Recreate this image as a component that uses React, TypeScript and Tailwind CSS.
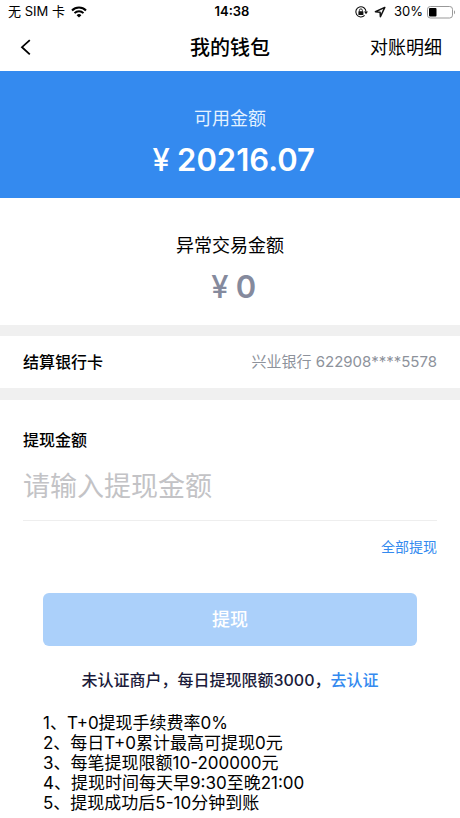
import React, { useState } from 'react';

const RULES = [
    '1、T+0提现手续费率0%',
    '2、每日T+0累计最高可提现0元',
    '3、每笔提现限额10-200000元',
    '4、提现时间每天早9:30至晚21:00',
    '5、提现成功后5-10分钟到账',
];

const WifiIcon: React.FC = () => (
    <svg viewBox="0 0 16 12" className="h-3 w-4" fill="none">
        <path
            d="M1 4.4a10 10 0 0 1 14 0"
            stroke="#000"
            strokeWidth="2.1"
        />
        <path
            d="M3.5 7.1a6.4 6.4 0 0 1 9 0"
            stroke="#000"
            strokeWidth="2"
        />
        <path d="M8 11.6 5.6 9.2a3.4 3.4 0 0 1 4.8 0Z" fill="#000" />
    </svg>
);

const RotationLockIcon: React.FC = () => (
    <svg viewBox="0 0 14 14" className="size-3.5" fill="none">
        <path
            d="M10.6 10.4A5.1 5.1 0 1 1 12 6.8"
            stroke="#111"
            strokeWidth="1.1"
        />
        <path d="M10 6.6h4L12 9.2Z" fill="#111" />
        <rect x="4.4" y="6.3" width="5" height="3.7" rx=".5" fill="#111" />
        <path
            d="M5.4 6.6V5.4a1.5 1.5 0 0 1 3 0v1.2"
            stroke="#111"
            strokeWidth=".9"
        />
    </svg>
);

const LocationIcon: React.FC = () => (
    <svg viewBox="0 0 12 12" className="size-3" fill="none">
        <path
            d="M10.8 1.4 1.4 5.8l4.7.4.3 4.6Z"
            stroke="#111"
            strokeWidth="1.5"
            strokeLinejoin="round"
        />
    </svg>
);

const BatteryIcon: React.FC = () => (
    <svg viewBox="0 0 29 13" className="h-[13px] w-[29px]" fill="none">
        <rect
            x=".5"
            y=".5"
            width="25"
            height="11.5"
            rx="2.8"
            stroke="#999"
        />
        <rect x="2" y="2" width="7.5" height="8.5" rx="1" fill="#000" />
        <path d="M27 4.2c1.4.5 1.4 3.6 0 4.1Z" fill="#999" />
    </svg>
);

const StatusBar: React.FC = () => (
    <div className="grid h-6 grid-cols-[1fr_auto_1fr] items-center pr-1 pl-2 text-[13px]">
        <div className="flex items-center gap-1.5">
            <span>无 SIM 卡</span>
            <WifiIcon />
        </div>
        <span className="font-semibold">14:38</span>
        <div className="flex items-center justify-end">
            <RotationLockIcon />
            <span className="mr-2 ml-1.5">
                <LocationIcon />
            </span>
            <span className="mr-1">30%</span>
            <BatteryIcon />
        </div>
    </div>
);

const Money: React.FC<{ value: string }> = ({ value }) => (
    <p className="flex text-[31px] leading-[45px] font-semibold">
        <span className="w-8 text-center font-medium">¥</span>
        <span>{value}</span>
    </p>
);

const App: React.FC = () => {
    const [amount, setAmount] = useState('');

    return (
        <main className="min-h-screen bg-white font-['Inter','Noto_Sans_CJK_SC',sans-serif] text-black">
            <StatusBar />
            <header className="grid h-[47px] grid-cols-[1fr_auto_1fr] items-center px-[18px]">
                <button type="button" aria-label="返回" className="w-4">
                    <svg
                        viewBox="0 0 16 18"
                        className="h-[18px] w-4"
                        fill="none"
                    >
                        <path
                            d="M11.8 1.2 4 8.2l7.8 7.2"
                            stroke="#000"
                            strokeWidth="1.8"
                        />
                    </svg>
                </button>
                <h1 className="text-xl font-medium">我的钱包</h1>
                <a href="#statement" className="text-right text-lg">
                    对账明细
                </a>
            </header>

            <section className="flex flex-col items-center bg-[#348aef] pt-[33px] pb-4 text-white">
                <h2 className="mb-[3px] text-lg leading-[30px] text-[#e4f2ff]">
                    可用金额
                </h2>
                <Money value="20216.07" />
            </section>
            <section className="flex flex-col items-center pt-[33px] pb-4">
                <h2 className="mb-[3px] text-lg leading-[30px]">
                    异常交易金额
                </h2>
                <div className="text-[#858a9d]">
                    <Money value="0" />
                </div>
            </section>

            <section className="flex h-[75px] items-center justify-between border-t-[11px] border-b-12 border-[#f0f0f0] px-[23px]">
                <h2 className="text-base font-medium">结算银行卡</h2>
                <span className="text-[15px] text-[#8d929b]">
                    兴业银行 622908****5578
                </span>
            </section>

            <form
                className="px-[23px] pt-7"
                onSubmit={(event) => event.preventDefault()}
            >
                <label
                    htmlFor="withdraw-amount"
                    className="block text-base font-medium"
                >
                    提现金额
                </label>
                <input
                    id="withdraw-amount"
                    inputMode="decimal"
                    value={amount}
                    onChange={(event) => setAmount(event.target.value)}
                    placeholder="请输入提现金额"
                    className="block h-[69px] w-full border-b border-[#eeeeee] text-[27px] outline-none placeholder:text-[#c3c3c6]"
                />
                <div className="flex justify-end pt-4">
                    <button
                        type="button"
                        onClick={() => setAmount('20216.07')}
                        className="text-sm text-[#348aef]"
                    >
                        全部提现
                    </button>
                </div>
                <div className="px-5 pt-9">
                    <button
                        type="submit"
                        className="h-[53px] w-full rounded-md bg-[#abd0fa] text-lg font-medium text-white"
                    >
                        提现
                    </button>
                </div>
            </form>

            <p className="pt-[22px] text-center text-base font-medium text-[#1b1b3a]">
                未认证商户，每日提现限额3000，
                <a href="#verify" className="text-[#348aef]">
                    去认证
                </a>
            </p>
            <ul className="px-[43px] pt-[21px] text-[17px] leading-5">
                {RULES.map((rule) => (
                    <li key={rule}>{rule}</li>
                ))}
            </ul>
        </main>
    );
};

export default App;
